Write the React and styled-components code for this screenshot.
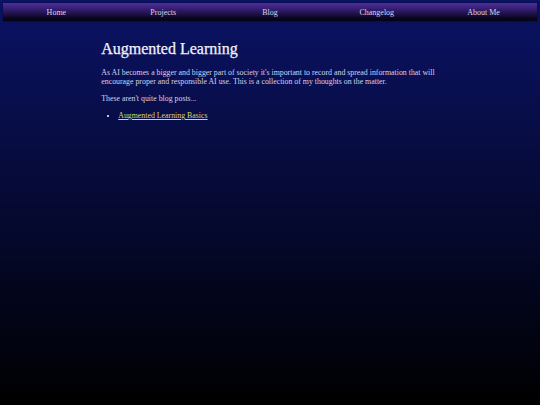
import React from "react";
import styled, { createGlobalStyle } from "styled-components";

const Global = createGlobalStyle`
  html, body {
    margin: 0;
    padding: 0;
    height: 100%;
  }
  body {
    background: linear-gradient(to bottom, #0b1366 0%, #000000 100%);
    color: #d6d6ee;
    font-family: "Liberation Serif", "DejaVu Serif", serif;
  }
  #root {
    min-height: 100%;
  }
`;

const Page = styled.div`
  padding-top: 3px;
  min-height: 402px;
`;

const Nav = styled.nav`
  display: flex;
  height: 18px;
  margin: 0 3px;
  background: linear-gradient(to bottom, #4e2f9a 0%, #2f1b68 40%, #0a0520 85%, #050210 100%);
  box-shadow: 0 0 2px rgba(0, 0, 0, 0.6);
`;

const NavItem = styled.a`
  flex: 1;
  display: flex;
  align-items: center;
  justify-content: center;
  color: #d8d4ec;
  font-size: 8px;
  text-decoration: none;
`;

const Main = styled.main`
  width: 62.5%;
  margin: 0 auto;
  padding-top: 17px;
`;

const Title = styled.h1`
  margin: 0 0 8px;
  font-size: 16px;
  font-weight: normal;
  color: #f2f2fa;
  line-height: 22px;
  -webkit-text-stroke: 0.25px #f2f2fa;
`;

const Para = styled.p`
  margin: 0 0 8px;
  font-size: 7.85px;
  line-height: 9px;
  color: #d4d4ec;
`;

const List = styled.ul`
  margin: 0;
  padding-left: 17px;
  font-size: 7.85px;
  line-height: 9px;
`;

const Item = styled.li`
  color: #ffffff;
`;

const Link = styled.a`
  color: #d9d86a;
  text-decoration: underline;
`;

const links = ["Home", "Projects", "Blog", "Changelog", "About Me"];

export default function App() {
  return (
    <>
      <Global />
      <Page>
        <Nav>
          {links.map((l) => (
            <NavItem key={l} href="#">{l}</NavItem>
          ))}
        </Nav>
        <Main>
          <Title>Augmented Learning</Title>
          <Para>
            As AI becomes a bigger and bigger part of society it's important to record and spread information that will encourage proper and responsible AI use. This is a collection of my thoughts on the matter.
          </Para>
          <Para>These aren't quite blog posts...</Para>
          <List>
            <Item>
              <Link href="#">Augmented Learning Basics</Link>
            </Item>
          </List>
        </Main>
      </Page>
    </>
  );
}
